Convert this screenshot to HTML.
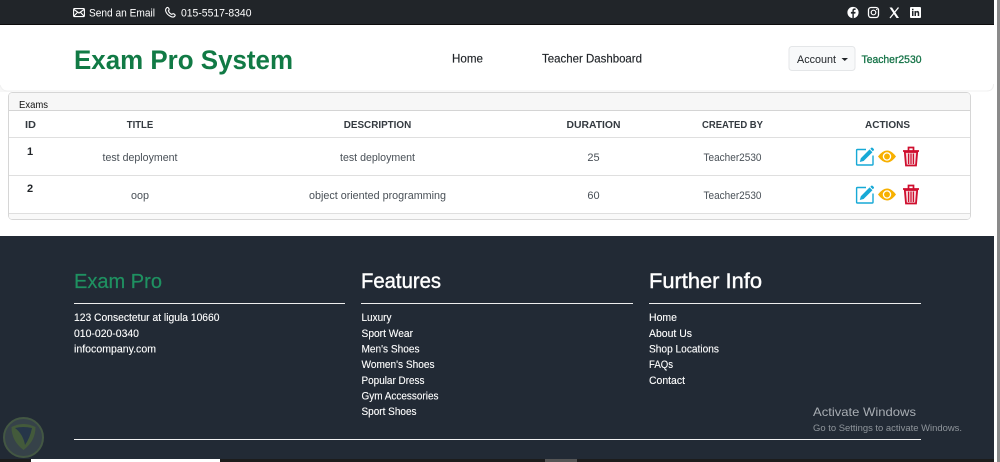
<!DOCTYPE html>
<html lang="en">
<head>
<meta charset="utf-8">
<title>Exam Pro System</title>
<style>
html,body{margin:0;padding:0;width:1000px;height:462px;overflow:hidden;background:#fff}
svg{display:block;position:absolute;left:0;top:0}
text{font-family:"Liberation Sans",sans-serif}
.w{fill:#fff}
.th{font-size:10.5px;font-weight:700;fill:#343a40;text-anchor:middle}
.td{font-size:11px;fill:#495057;text-anchor:middle}
.f{font-size:11px;fill:#fff;stroke:#fff;stroke-width:.12px}
.h{font-size:21px;fill:#fff;stroke:#fff;stroke-width:.4px}
</style>
</head>
<body>
<svg width="1000" height="462" viewBox="0 0 1000 462" xmlns="http://www.w3.org/2000/svg">
<rect width="1000" height="462" fill="#fff"/>
<!-- scrollbar -->
<rect x="997" y="0" width="3" height="462" fill="#8a8a8a"/>
<!-- top bar -->
<rect x="0" y="0" width="994" height="24" fill="#212529"/>
<rect x="0" y="24" width="994" height="1" fill="#0c0c0c"/>
<!-- envelope / phone -->
<g fill="none" stroke="#fff" stroke-width="1.1">
<rect x="73.600" y="8.600" width="10.800" height="8" rx="1"/>
<path d="M74 9.500l5 3.600 5-3.600M74 16l3.600-3.800M84 16l-3.600-3.800"/>
<path d="M166.500 8c1-1 1.800-.6 2.400.6.5 1 .3 1.500-.5 2.200.6 1.600 1.800 2.900 3.400 3.600.8-.8 1.400-1 2.300-.4 1.200.7 1.400 1.500.5 2.300-1 1-2.300.9-3.600.3-2.600-1.200-4.600-3.200-5.300-5.600-.3-1.200-.1-2.100.8-3z"/>
</g>
<text x="89" y="16.500" font-size="11" class="w" textLength="66" lengthAdjust="spacingAndGlyphs">Send an Email</text>
<text x="181" y="16.500" font-size="11" class="w" textLength="70.500" lengthAdjust="spacingAndGlyphs">015-5517-8340</text>
<!-- socials -->
<circle cx="853" cy="12.500" r="5.600" fill="#fff"/>
<path d="M853.800 18v-4.400h1.500l.3-1.700h-1.800v-1c0-.6.3-.9.900-.9h.9V8.500c-1.900-.4-3.200.3-3.200 2.100v1.300h-1.500v1.700h1.500V18z" fill="#212529"/>
<g fill="none" stroke="#fff">
<rect x="868.500" y="7.500" width="10" height="10" rx="2.600" stroke-width="1.300"/>
<circle cx="873.500" cy="12.500" r="2.300" stroke-width="1.200"/>
</g>
<circle cx="876.700" cy="9.400" r=".7" fill="#fff"/>
<path d="M889.500 7.500h2.500l7 10.500h-2.500z" fill="#fff"/>
<path d="M898.500 7.500L890 18" stroke="#fff" stroke-width="1.300" fill="none"/>
<rect x="910" y="7" width="11" height="11" rx="1" fill="#fff"/>
<path d="M912 11h1.500v5H912zM912 8.800h1.500v1.400H912zM914.500 11h1.400v.7c.8-1.200 3.300-1.200 3.300 1.300v3h-1.500v-2.700c0-1.300-1.700-1.300-1.700 0V16h-1.500z" fill="#212529"/>
<!-- navbar -->
<rect x="0" y="84" width="12" height="8" fill="#f7f7f7"/>
<path d="M0 25h993.500v59q0 7-7 7H7q-5 0-7-6z" fill="#fff"/>
<path d="M993.500 84q0 7-7 7H7q-5 0-7-6" fill="none" stroke="#f0f0f0"/>
<text x="74" y="69" font-size="27" font-weight="700" fill="#117a45" textLength="219" lengthAdjust="spacingAndGlyphs">Exam Pro System</text>
<text x="452" y="62.500" font-size="12" fill="#212529" stroke="#212529" stroke-width=".15" textLength="31" lengthAdjust="spacingAndGlyphs">Home</text>
<text x="542" y="62.500" font-size="12" fill="#212529" stroke="#212529" stroke-width=".15" textLength="100" lengthAdjust="spacingAndGlyphs">Teacher Dashboard</text>
<rect x="789" y="46.500" width="66" height="24" rx="3" fill="#f8f9fa" stroke="#e4e6e8"/>
<text x="797" y="63" font-size="11" fill="#212529" textLength="39" lengthAdjust="spacingAndGlyphs">Account</text>
<path d="M841.500 58h6.500l-3.250 3z" fill="#212529"/>
<text x="861.500" y="63" font-size="11" fill="#157347" stroke="#157347" stroke-width=".3" textLength="60" lengthAdjust="spacingAndGlyphs">Teacher2530</text>
<!-- card -->
<rect x="8.500" y="92.500" width="962" height="127" rx="4" fill="#fff" stroke="#d6d6d6"/>
<path d="M9 110V96q0-3 3-3h955q3 0 3 3v14z" fill="#f7f7f7"/>
<rect x="9" y="110" width="961" height="1" fill="#d4d4d4"/>
<path d="M9 214h961v2q0 3-3 3H12q-3 0-3-3z" fill="#f9f9f9"/>
<text x="19" y="108" font-size="10.500" fill="#111" textLength="29" lengthAdjust="spacingAndGlyphs">Exams</text>
<text class="th" x="30.500" y="128" textLength="11" lengthAdjust="spacingAndGlyphs">ID</text>
<text class="th" x="140" y="128" textLength="26.500" lengthAdjust="spacingAndGlyphs">TITLE</text>
<text class="th" x="377.500" y="128" textLength="67.500" lengthAdjust="spacingAndGlyphs">DESCRIPTION</text>
<text class="th" x="593.500" y="128" textLength="54" lengthAdjust="spacingAndGlyphs">DURATION</text>
<text class="th" x="732.500" y="128" textLength="61" lengthAdjust="spacingAndGlyphs">CREATED BY</text>
<text class="th" x="887.500" y="128" textLength="45" lengthAdjust="spacingAndGlyphs">ACTIONS</text>
<rect x="9" y="137" width="961" height="1" fill="#dfdfdf"/>
<rect x="9" y="175" width="961" height="1" fill="#dfdfdf"/>
<rect x="9" y="213" width="961" height="1" fill="#dfdfdf"/>
<text x="30" y="155" font-size="11" font-weight="700" fill="#212529" text-anchor="middle">1</text>
<text x="30" y="192" font-size="11" font-weight="700" fill="#212529" text-anchor="middle">2</text>
<text class="td" x="140" y="161" textLength="75" lengthAdjust="spacingAndGlyphs">test deployment</text>
<text class="td" x="377.500" y="161" textLength="75" lengthAdjust="spacingAndGlyphs">test deployment</text>
<text class="td" x="593.500" y="161">25</text>
<text class="td" x="732.500" y="161" textLength="58" lengthAdjust="spacingAndGlyphs">Teacher2530</text>
<text class="td" x="140" y="199" textLength="18" lengthAdjust="spacingAndGlyphs">oop</text>
<text class="td" x="377.500" y="199" textLength="137" lengthAdjust="spacingAndGlyphs">object oriented programming</text>
<text class="td" x="593.500" y="199">60</text>
<text class="td" x="732.500" y="199" textLength="58" lengthAdjust="spacingAndGlyphs">Teacher2530</text>
<!-- action icons row 1 -->
<g>
<path d="M866 149.500h-8.500q-.9 0-.9.900v13.700q0 .9.900.9h14.600q.9 0 .9-.9v-8.600" fill="none" stroke="#17a9d6" stroke-width="1.400"/>
<path d="M859.800 162l1-3.800 8.800-8.800 2.800 2.800-8.800 8.800zM870.300 148.700l1-1q.6-.5 1.200 0l1.300 1.300q.5.6 0 1.200l-1 1z" fill="#17a9d6"/>
<path d="M878 156.500q9-12 18 0-9 12-18 0z" fill="#f7b000"/>
<circle cx="887" cy="156.500" r="3.600" fill="#f7b000" stroke="#fff" stroke-width="1.300"/>
<path d="M903 151h16M908.500 150.500v-3h5v3" fill="none" stroke="#cf0e2e" stroke-width="1.700"/>
<path d="M904.800 152l1.200 13.500h10l1.200-13.500z" fill="#f3d0d6" stroke="#cf0e2e" stroke-width="1.800"/>
<path d="M908.600 153.500v10.500M911 153.500v10.500M913.400 153.500v10.500" stroke="#cf0e2e" stroke-width="1.200"/>
</g>
<g transform="translate(0 38)">
<path d="M866 149.500h-8.500q-.9 0-.9.900v13.700q0 .9.900.9h14.600q.9 0 .9-.9v-8.600" fill="none" stroke="#17a9d6" stroke-width="1.400"/>
<path d="M859.800 162l1-3.800 8.800-8.800 2.800 2.800-8.800 8.800zM870.300 148.700l1-1q.6-.5 1.200 0l1.300 1.300q.5.6 0 1.200l-1 1z" fill="#17a9d6"/>
<path d="M878 156.500q9-12 18 0-9 12-18 0z" fill="#f7b000"/>
<circle cx="887" cy="156.500" r="3.600" fill="#f7b000" stroke="#fff" stroke-width="1.300"/>
<path d="M903 151h16M908.500 150.500v-3h5v3" fill="none" stroke="#cf0e2e" stroke-width="1.700"/>
<path d="M904.800 152l1.200 13.500h10l1.200-13.500z" fill="#f3d0d6" stroke="#cf0e2e" stroke-width="1.800"/>
<path d="M908.600 153.500v10.500M911 153.500v10.500M913.400 153.500v10.500" stroke="#cf0e2e" stroke-width="1.200"/>
</g>
<!-- footer -->
<rect x="0" y="236" width="994" height="226" fill="#222a35"/>
<text x="74" y="288" font-size="20" fill="#1f9161" stroke="#1f9161" stroke-width=".2" textLength="88" lengthAdjust="spacingAndGlyphs">Exam Pro</text>
<text class="h" x="361" y="288" textLength="80" lengthAdjust="spacingAndGlyphs">Features</text>
<text class="h" x="649" y="288" textLength="113" lengthAdjust="spacingAndGlyphs">Further Info</text>
<rect x="74" y="303" width="271" height="1" fill="#eee"/>
<rect x="361" y="303" width="272" height="1" fill="#eee"/>
<rect x="649" y="303" width="272" height="1" fill="#eee"/>
<text class="f" x="74" y="321" textLength="145.500" lengthAdjust="spacingAndGlyphs">123 Consectetur at ligula 10660</text>
<text class="f" x="74" y="337" textLength="65" lengthAdjust="spacingAndGlyphs">010-020-0340</text>
<text class="f" x="74" y="352.500" textLength="82" lengthAdjust="spacingAndGlyphs">infocompany.com</text>
<text class="f" x="361.500" y="321" textLength="30" lengthAdjust="spacingAndGlyphs">Luxury</text>
<text class="f" x="361.500" y="337" textLength="51.500" lengthAdjust="spacingAndGlyphs">Sport Wear</text>
<text class="f" x="361.500" y="352.500" textLength="58" lengthAdjust="spacingAndGlyphs">Men's Shoes</text>
<text class="f" x="361.500" y="368" textLength="73" lengthAdjust="spacingAndGlyphs">Women's Shoes</text>
<text class="f" x="361.500" y="384" textLength="63" lengthAdjust="spacingAndGlyphs">Popular Dress</text>
<text class="f" x="361.500" y="399.500" textLength="77" lengthAdjust="spacingAndGlyphs">Gym Accessories</text>
<text class="f" x="361.500" y="415" textLength="55" lengthAdjust="spacingAndGlyphs">Sport Shoes</text>
<text class="f" x="649" y="321" textLength="28" lengthAdjust="spacingAndGlyphs">Home</text>
<text class="f" x="649" y="337" textLength="43" lengthAdjust="spacingAndGlyphs">About Us</text>
<text class="f" x="649" y="352.500" textLength="70" lengthAdjust="spacingAndGlyphs">Shop Locations</text>
<text class="f" x="649" y="368" textLength="24" lengthAdjust="spacingAndGlyphs">FAQs</text>
<text class="f" x="649" y="384" textLength="36" lengthAdjust="spacingAndGlyphs">Contact</text>
<rect x="74" y="439" width="847" height="1" fill="#f2f2f2"/>
<!-- activate windows watermark -->
<text x="813" y="416" font-size="12" fill="#a8adb3" textLength="103" lengthAdjust="spacingAndGlyphs">Activate Windows</text>
<text x="813" y="431" font-size="9.500" fill="#8f959b" textLength="149" lengthAdjust="spacingAndGlyphs">Go to Settings to activate Windows.</text>
<!-- corner logo -->
<g opacity=".75">
<circle cx="23.500" cy="437.500" r="19.500" fill="#3d4a50" stroke="#4f6648" stroke-width="2"/>
<path d="M11.500 427q12-6 24 0 0 14-12 23-12-9-12-23z" fill="#4f6a3e"/>
<path d="M15 428q8-2 17 0-2 10-7 17-2-11-10-17z" fill="#283a50"/>
</g>
<!-- taskbar strip -->
<rect x="0" y="459" width="994" height="3" fill="#1c1c1c"/>
<rect x="31" y="459" width="189" height="3" fill="#fff"/>
<rect x="545" y="459" width="32" height="3" fill="#555"/>
</svg>
</body>
</html>
